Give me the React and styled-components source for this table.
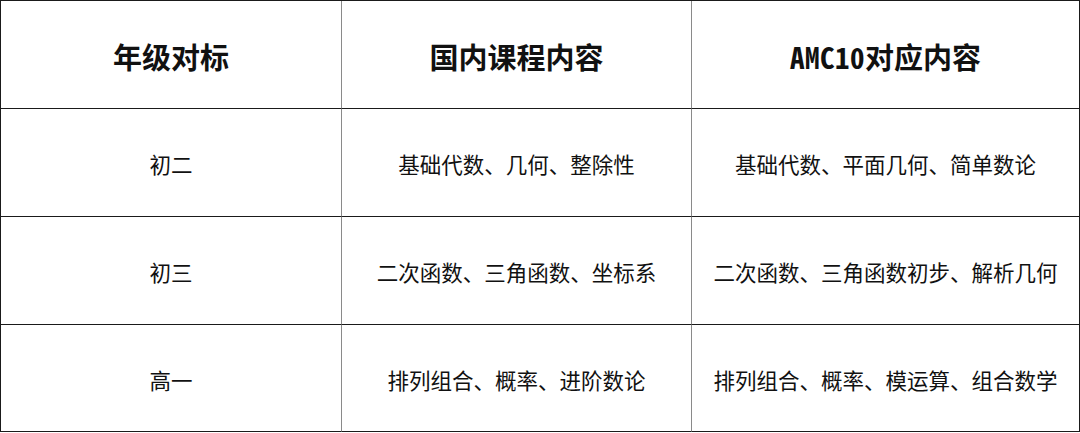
import React from "react";
import styled, { createGlobalStyle } from "styled-components";

const rows = [
  { grade: "初二", domestic: "基础代数、几何、整除性", amc: "基础代数、平面几何、简单数论" },
  { grade: "初三", domestic: "二次函数、三角函数、坐标系", amc: "二次函数、三角函数初步、解析几何" },
  { grade: "高一", domestic: "排列组合、概率、进阶数论", amc: "排列组合、概率、模运算、组合数学" },
];

const GlobalStyle = createGlobalStyle`
  html, body {
    margin: 0;
    padding: 0;
    background: #ffffff;
  }
  body {
    font-family: "Noto Sans CJK SC", "Noto Sans", sans-serif;
    color: #111111;
  }
`;

const Table = styled.div`
  width: 1080px;
  box-sizing: border-box;
  display: grid;
  grid-template-columns: 341px 350px 388px;
  grid-template-rows: 108px 108px 108px 107px;
  border-top: 1px solid #1a1a1a;
  border-left: 1px solid #1a1a1a;
  background: #ffffff;
`;

const Cell = styled.div`
  box-sizing: border-box;
  display: flex;
  align-items: center;
  justify-content: center;
  border-bottom: 1px solid #1a1a1a;
  border-right: 1px solid ${(p) => (p.$last ? "#1a1a1a" : "#8a8a8a")};
  font-size: 21.5px;
  font-weight: 400;
  white-space: nowrap;
  padding-top: 2px;
`;

const HeaderCell = styled(Cell)`
  font-size: 29px;
  font-weight: 700;
  padding-top: 3px;
`;

const Latin = styled.span`
  font-family: "Noto Sans Mono CJK SC", "Noto Sans CJK SC", sans-serif;
  letter-spacing: 0.5px;
`;

export default function App() {
  return (
    <>
      <GlobalStyle />
      <Table>
        <HeaderCell>年级对标</HeaderCell>
        <HeaderCell>国内课程内容</HeaderCell>
        <HeaderCell $last>
          <Latin>AMC10</Latin>对应内容
        </HeaderCell>
        {rows.map((r) => (
          <React.Fragment key={r.grade}>
            <Cell>{r.grade}</Cell>
            <Cell>{r.domestic}</Cell>
            <Cell $last>{r.amc}</Cell>
          </React.Fragment>
        ))}
      </Table>
    </>
  );
}
